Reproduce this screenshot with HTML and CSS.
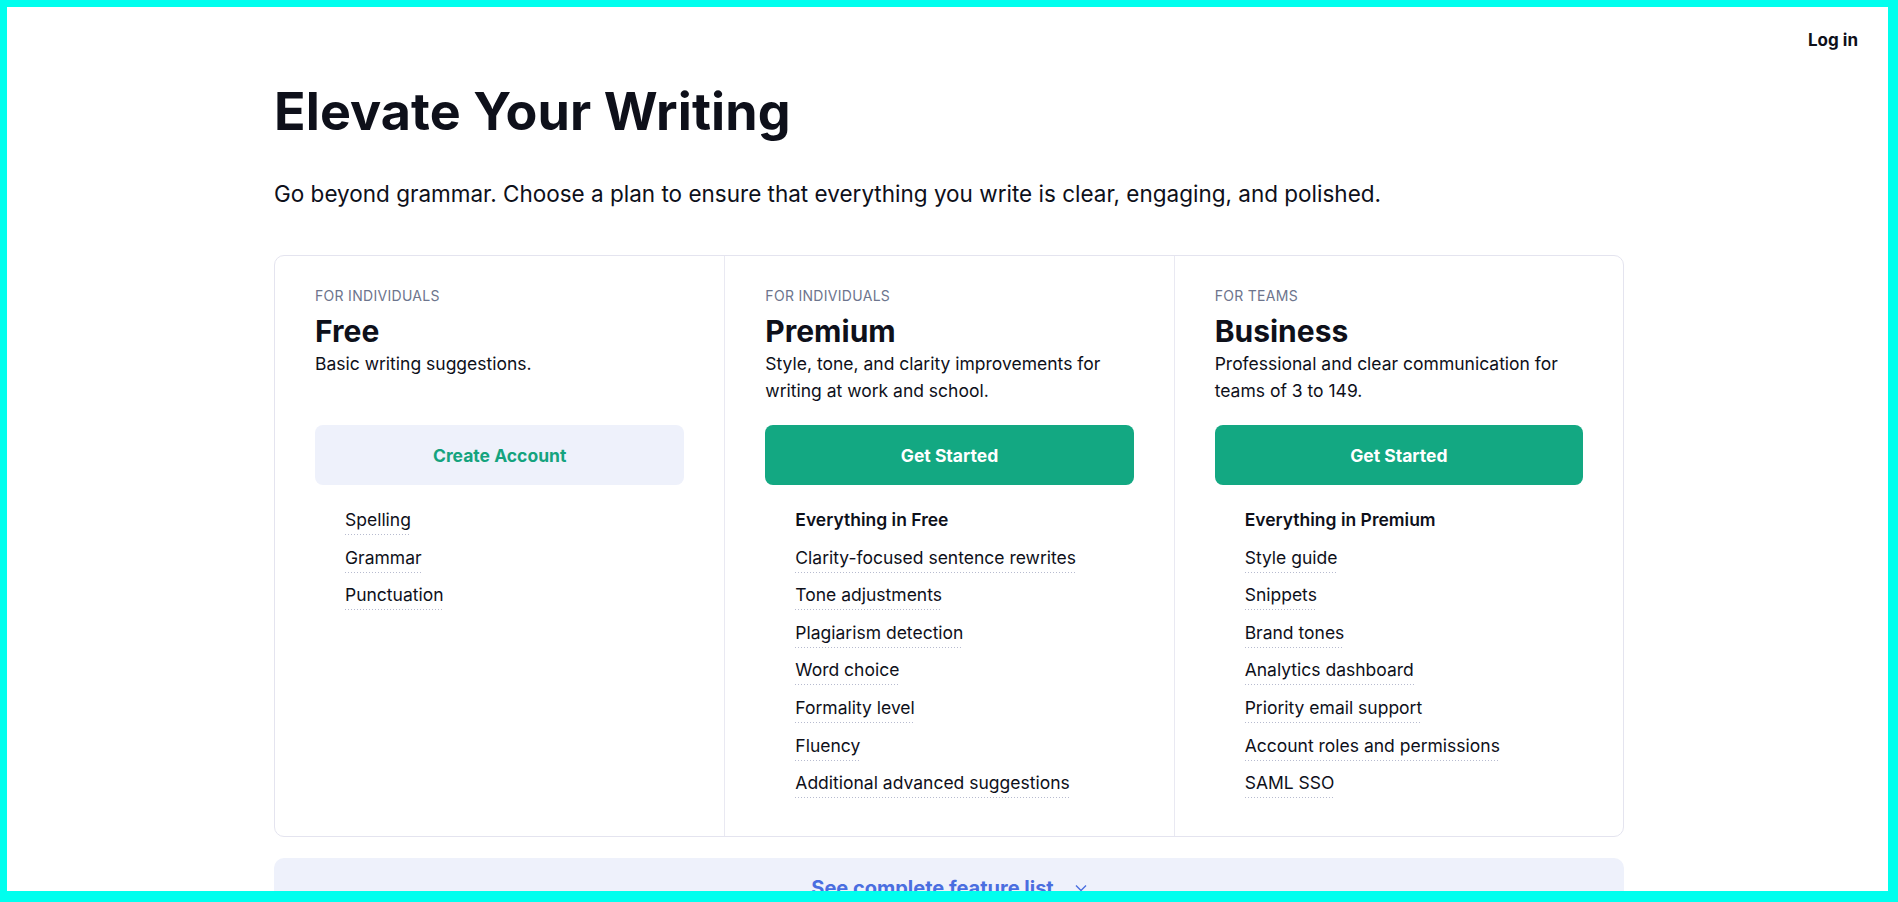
FILE: index.html
```html
<!DOCTYPE html>
<html lang="en">
<head>
    <meta charset="UTF-8" />
    <meta name="viewport" content="width=device-width, initial-scale=1.0"/>
    <title>Plans</title>
    <link rel="stylesheet" href="styles.css">
</head>
<body>
    <div class="frame"></div>

    <header class="topbar">
        <a class="login" href="#">Log in</a>
    </header>

    <main class="container">
        <h1>Elevate Your Writing</h1>
        <p class="lead">Go beyond grammar. Choose a plan to ensure that everything you write is clear, engaging, and polished.</p>

        <div class="plans">
            <section class="plan">
                <div class="eyebrow">For individuals</div>
                <h2>Free</h2>
                <p class="desc">Basic writing suggestions.</p>
                <a class="btn btn-light" href="#">Create Account</a>
                <ul class="features">
                    <li><span>Spelling</span></li>
                    <li><span>Grammar</span></li>
                    <li><span>Punctuation</span></li>
                </ul>
            </section>

            <section class="plan">
                <div class="eyebrow">For individuals</div>
                <h2>Premium</h2>
                <p class="desc">Style, tone, and clarity improvements for writing at work and school.</p>
                <a class="btn btn-green" href="#">Get Started</a>
                <ul class="features">
                    <li class="heading">Everything in Free</li>
                    <li><span>Clarity-focused sentence rewrites</span></li>
                    <li><span>Tone adjustments</span></li>
                    <li><span>Plagiarism detection</span></li>
                    <li><span>Word choice</span></li>
                    <li><span>Formality level</span></li>
                    <li><span>Fluency</span></li>
                    <li><span>Additional advanced suggestions</span></li>
                </ul>
            </section>

            <section class="plan">
                <div class="eyebrow">For teams</div>
                <h2>Business</h2>
                <p class="desc">Professional and clear communication for teams of 3 to 149.</p>
                <a class="btn btn-green" href="#">Get Started</a>
                <ul class="features">
                    <li class="heading">Everything in Premium</li>
                    <li><span>Style guide</span></li>
                    <li><span>Snippets</span></li>
                    <li><span>Brand tones</span></li>
                    <li><span>Analytics dashboard</span></li>
                    <li><span>Priority email support</span></li>
                    <li><span>Account roles and permissions</span></li>
                    <li><span>SAML SSO</span></li>
                </ul>
            </section>
        </div>

        <a class="feature-list" href="#">
            See complete feature list
            <svg width="12" height="8" viewBox="0 0 12 8" fill="none" stroke="currentColor" stroke-width="1.4">
                <path d="M1 1.5l5 5 5-5"/>
            </svg>
        </a>
    </main>
</body>
</html>
```

FILE: styles.css
```css
body {
    margin: 0;
    padding: 0;
    font-family: 'Inter', 'Roboto', sans-serif;
    background-color: #fff;
    color: #0e101a;
}

a {
    text-decoration: none;
}

.frame {
    position: fixed;
    top: 0;
    left: 0;
    right: 0;
    bottom: 0;
    border-style: solid;
    border-color: #00ffee;
    border-width: 7px 10px 11px 7px;
    pointer-events: none;
    z-index: 10;
}

.topbar {
    display: flex;
    justify-content: flex-end;
    padding: 28px 40px 0 0;
}

.login {
    font-size: 17px;
    line-height: 24px;
    font-weight: 700;
    color: #0e101a;
}

.container {
    max-width: 1350px;
    margin: 0 auto;
}

h1 {
    margin: 29px 0 0;
    font-size: 52px;
    line-height: 62px;
    font-weight: 700;
    letter-spacing: 0.1px;
}

.lead {
    margin: 37px 0 0;
    font-size: 22.5px;
    line-height: 28px;
}

.plans {
    display: grid;
    grid-template-columns: repeat(3, 1fr);
    margin-top: 47px;
    border: 1px solid #e4e4ef;
    border-radius: 10px;
}

.plan {
    display: flex;
    flex-direction: column;
    padding: 32px 40px 38px;
}

.plan + .plan {
    border-left: 1px solid #e9e9f2;
}

.eyebrow {
    font-size: 14px;
    line-height: 16px;
    text-transform: uppercase;
    letter-spacing: 0.3px;
    color: #6d758d;
}

h2 {
    margin: 10px 0 0;
    font-size: 30px;
    line-height: 34px;
    font-weight: 700;
}

.desc {
    margin: 2px 0 0;
    min-height: 54px;
    font-size: 17.5px;
    line-height: 27px;
}

.btn {
    display: flex;
    align-items: center;
    justify-content: center;
    height: 60px;
    margin-top: 21px;
    border-radius: 8px;
    font-size: 17.5px;
    font-weight: 700;
}

.btn-light {
    background-color: #eef1fb;
    color: #15a37e;
}

.btn-green {
    background-color: #13a882;
    color: #fff;
}

.features {
    display: flex;
    flex-direction: column;
    gap: 11.6px;
    list-style: none;
    margin: 24px 0 0;
    padding: 0 0 0 30px;
}

.features li {
    display: flex;
    font-size: 17.5px;
    line-height: 22px;
}

.features li span {
    padding-bottom: 4px;
    background: linear-gradient(to right, #b7bbcf 1px, transparent 1px) repeat-x left bottom / 3px 1px;
}

.features li.heading {
    font-weight: 600;
    height: 26px;
}

.feature-list {
    display: flex;
    align-items: center;
    justify-content: center;
    gap: 21px;
    margin-top: 21px;
    padding: 18px 0;
    border-radius: 10px;
    background-color: #eef1fb;
    color: #4a6ee0;
    font-size: 20px;
    line-height: 24px;
    font-weight: 700;
}
```
